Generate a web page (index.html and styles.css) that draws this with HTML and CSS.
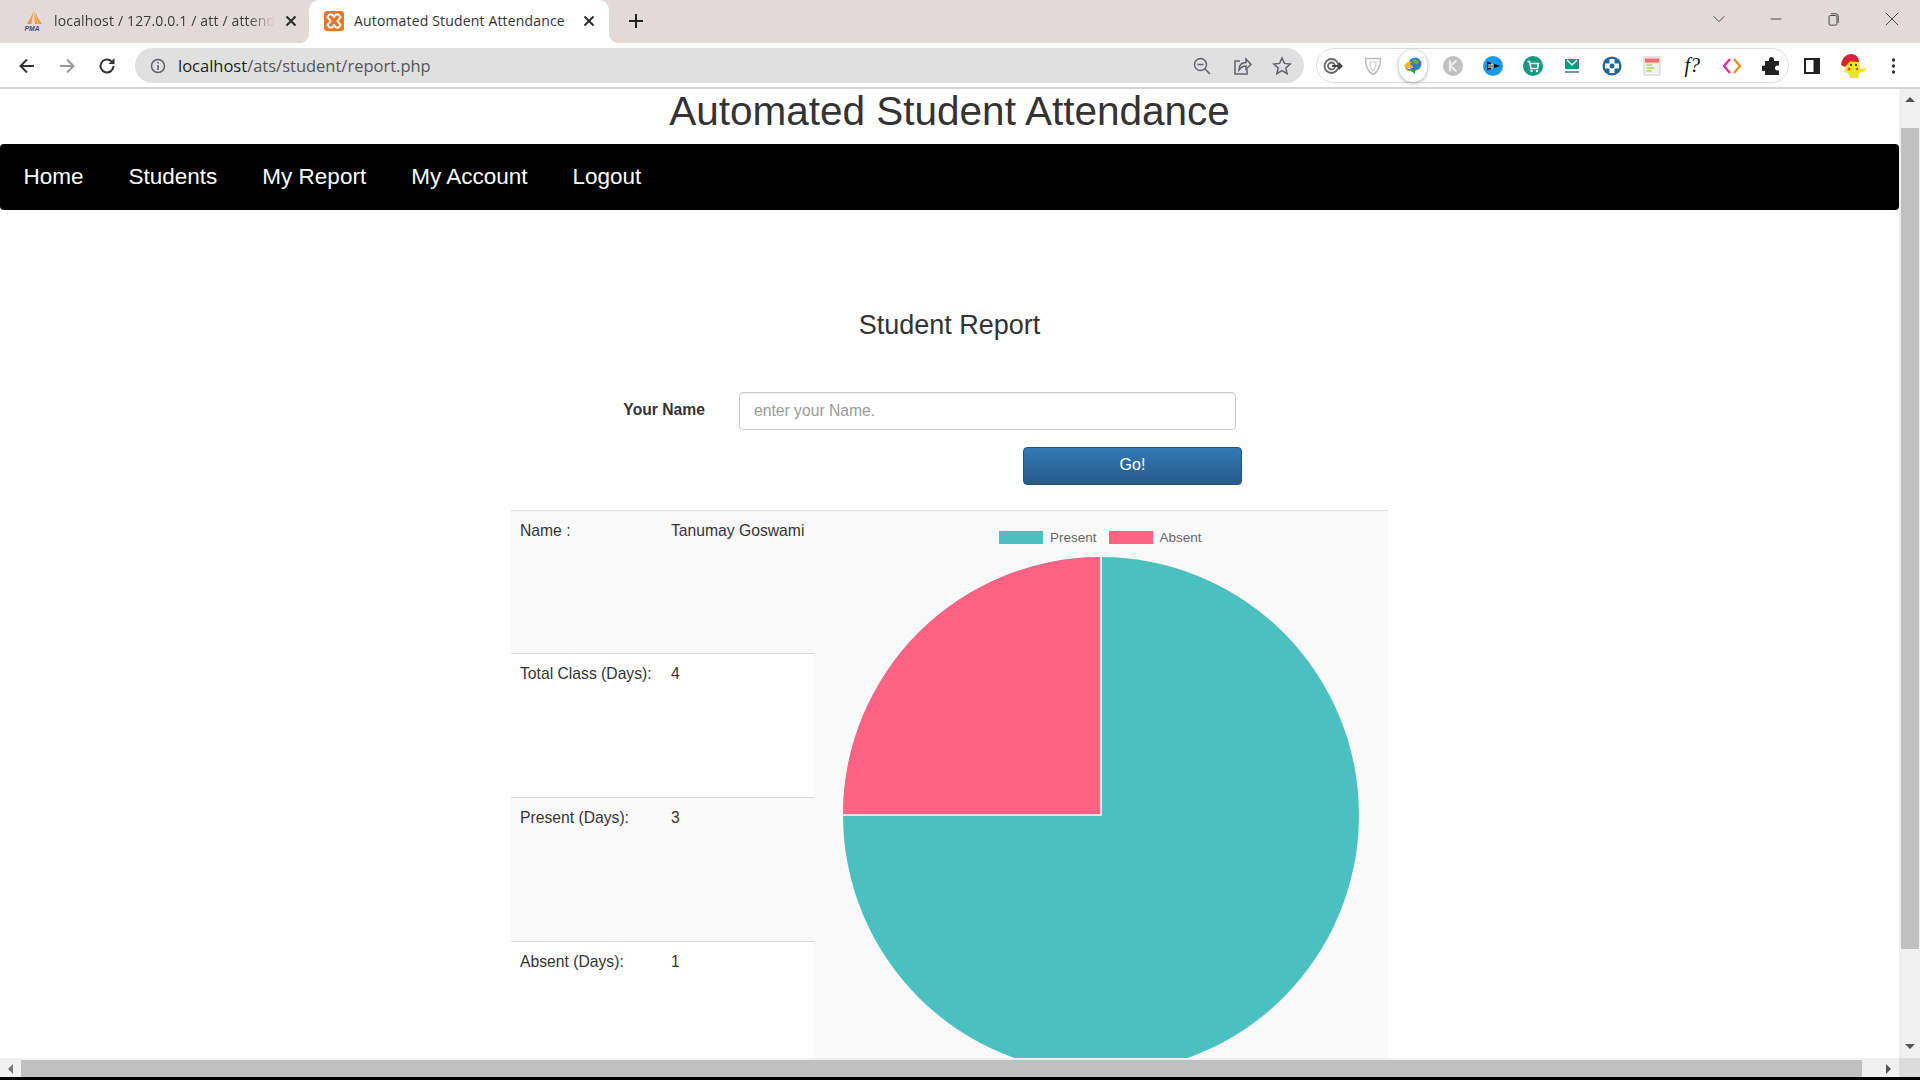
FILE: index.html
```
<!DOCTYPE html>
<html lang="en">
<head>
<meta charset="utf-8">
<title>Automated Student Attendance</title>
<link rel="stylesheet" href="styles.css">
</head>
<body>
<div class="window">
  <header class="tabbar">
    <div class="tab tab-idle">
      <svg class="favicon" viewBox="0 0 20 20"><path d="M9.500 0 7 6 3 13h4.500zM10 0l1 13h3zM11 1l3 6 4 6h-3.500z" fill="#f29a2e"/><text x="0.500" y="19.500" class="pma">PMA</text></svg>
      <span class="tab-title fade">localhost / 127.0.0.1 / att / attendance</span>
      <svg class="tab-x" viewBox="0 0 12 12"><path d="M1.500 1.500l9 9M10.500 1.500l-9 9"/></svg>
    </div>
    <div class="tab tab-active">
      <svg class="favicon" viewBox="0 0 20 20"><rect width="20" height="20" rx="3" fill="#f0731f"/><path d="M5.500 3.500h2.500l2 2.500 2-2.500h2.500l2 2.500-3 4 3 4-2 2.500H12l-2-2.500-2 2.500H5.500l-2-2.500 3-4-3-4z" fill="none" stroke="#fff" stroke-width="2"/></svg>
      <span class="tab-title">Automated Student Attendance</span>
      <svg class="tab-x" viewBox="0 0 12 12"><path d="M1.500 1.500l9 9M10.500 1.500l-9 9"/></svg>
    </div>
    <svg class="new-tab" viewBox="0 0 16 16"><path d="M8 1v14M1 8h14"/></svg>
    <div class="win-controls">
      <svg class="win-ic" viewBox="0 0 16 16"><path d="M2 5l6 6 6-6"/></svg>
      <svg class="win-ic" viewBox="0 0 16 16"><path d="M2 8h12"/></svg>
      <svg class="win-ic" viewBox="0 0 16 16"><path d="M3.500 5.500a1.500 1.500 0 0 1 1.500-1.500h6a1.500 1.500 0 0 1 1.500 1.500v8a1.500 1.500 0 0 1-1.500 1.500h-6a1.500 1.500 0 0 1-1.500-1.500zM5.500 2h6a2.500 2.500 0 0 1 2.500 2.500v8"/></svg>
      <svg class="win-ic win-close" viewBox="0 0 16 16"><path d="M1 1l14 14M15 1 1 15"/></svg>
    </div>
  </header>

  <div class="toolbar">
    <div class="nav-btns">
      <svg class="tb-ic" viewBox="0 0 20 20"><path d="M17 10H4M10 3.500 3.500 10l6.500 6.500" class="st-dark"/></svg>
      <svg class="tb-ic" viewBox="0 0 20 20"><path d="M3 10h13M10 3.500l6.500 6.500-6.500 6.500" class="st-grey"/></svg>
      <svg class="tb-ic" viewBox="0 0 20 20"><path d="M16.500 10a6.500 6.500 0 1 1-1.900-4.600" class="st-dark"/><path d="M17.500 2v6h-6z" fill="#333"/></svg>
    </div>
    <div class="omnibox">
      <svg class="info" viewBox="0 0 16 16"><circle cx="8" cy="8" r="6.500" fill="none" stroke="#5f6368" stroke-width="1.500"/><path d="M7.200 7h1.600v5H7.200zM7.200 4h1.600v1.600H7.200z" fill="#5f6368"/></svg>
      <span class="url"><span class="url-host">localhost</span>/ats/student/report.php</span>
      <div class="omni-actions">
        <svg class="tb-ic" viewBox="0 0 20 20"><circle cx="8.500" cy="8.500" r="6" class="st-thin"/><path d="M5.500 8.500h6M13 13l5 5" class="st-thin"/></svg>
        <svg class="tb-ic" viewBox="0 0 20 20"><path d="M8 5H3v13h12v-5M7 14c0-5 3-7.500 7-7.500V3l5 5.500L14 13v-3c-3 0-5 1-7 4z" class="st-thin"/></svg>
        <svg class="tb-ic" viewBox="0 0 20 20"><path d="M10 2l2.400 5.400 5.800.6-4.400 3.900 1.300 5.800L10 14.700 4.900 17.700l1.300-5.800L1.800 8l5.800-.6z" class="st-thin"/></svg>
      </div>
    </div>
    <div class="ext-pill">
      <svg class="ext" viewBox="0 0 20 20"><circle cx="8.500" cy="10" r="7" fill="none" stroke="#666" stroke-width="1.800"/><circle cx="8.500" cy="10" r="3.500" fill="none" stroke="#666" stroke-width="1.800"/><path d="M9 10h10M15.500 7l3 3-3 3" fill="none" stroke="#444" stroke-width="2"/></svg>
      <svg class="ext" viewBox="0 0 20 20"><path d="M2.500 2.500h15c0 8-2 13-7.500 16-5.500-3-7.500-8-7.500-16z" fill="none" stroke="#bbb" stroke-width="1.500"/><path d="M7 6h6c0 4-1 7-3 9-2-2-3-5-3-9z" fill="none" stroke="#ccc" stroke-width="1.200"/></svg>
      <div class="ext-idm"><svg class="ext" viewBox="0 0 20 20"><circle cx="12" cy="8" r="6.500" fill="#2f7fbe"/><path d="M9 3c3 0 6 1 7 4-3 2-6 0-7-4z" fill="#6bb04a"/><path d="M1 10c2-4 5-5 8-4l-2 2c2 1 3 2 3 4H3z" fill="#f5b31b"/><path d="M2 11c3 3 9 3 13 0l-3 4v3l-4-3c-3 0-5-1-6-4z" fill="#3b9a3c"/></svg></div>
      <svg class="ext" viewBox="0 0 20 20"><circle cx="10" cy="10" r="10" fill="#c0c0c0"/><path d="M7 4.500v11M13.500 4.500 7.500 10l6 5.500" fill="none" stroke="#eee" stroke-width="2.200"/></svg>
      <svg class="ext" viewBox="0 0 20 20"><circle cx="10" cy="10" r="10" fill="#1a9aef"/><path d="M4 5.500 17 10 4 14.500z" fill="#151515"/><path d="M6 8v4M8 8h2v4H8z" stroke="#fff" fill="none"/></svg>
      <svg class="ext" viewBox="0 0 20 20"><circle cx="10" cy="10" r="10" fill="#119c7d"/><path d="M4.500 5.500h2l1.500 7h6.500l1-5H7" fill="none" stroke="#fff" stroke-width="1.600"/><circle cx="8.500" cy="15" r="1.200" fill="#fff"/><circle cx="14" cy="15" r="1.200" fill="#fff"/></svg>
      <svg class="ext" viewBox="0 0 20 20"><rect x="3" y="3" width="14" height="10" fill="#17987e"/><path d="M5 4l5 5 5-5" fill="none" stroke="#fff" stroke-width="1.500"/><path d="M3 16h14" stroke="#5b6b78" stroke-width="1.500"/></svg>
      <svg class="ext" viewBox="0 0 20 20"><circle cx="10" cy="10" r="9.500" fill="#1d6a9b"/><path d="M7.500 3h5v4.500H17v5h-4.500V17h-5v-4.500H3v-5h4.500z" fill="#fff"/><circle cx="10" cy="10" r="2.500" fill="#1d6a9b"/></svg>
      <svg class="ext" viewBox="0 0 20 20"><rect x="2" y="1" width="16" height="18" fill="#f2f2f0" stroke="#ccc"/><rect x="3" y="2.500" width="14" height="4" fill="#f66"/><path d="M4.500 9h6M4.500 12h8M4.500 15h5" stroke="#a6d66e" stroke-width="1.500"/></svg>
      <span class="ext-f">f?</span>
      <svg class="ext" viewBox="0 0 20 20"><path d="M8 3 2 10l6 7" fill="none" stroke="#ec2c8c" stroke-width="2.400"/><path d="M12 3l6 7-6 7" fill="none" stroke="#f58a1f" stroke-width="2.400"/></svg>
      <svg class="ext" viewBox="0 0 20 20"><path d="M7 3.500a2.500 2.500 0 0 1 5 0V5h5v4.500h-1.500a2.500 2.500 0 0 0 0 5H17V19H3v-4H1.800a2.700 2.700 0 0 1 0-5.500H3V5h4z" fill="#222"/></svg>
    </div>
    <div class="tb-end">
      <svg class="ext" viewBox="0 0 20 20"><rect x="2" y="2" width="16" height="16" fill="#222"/><rect x="4" y="4" width="7.500" height="12" fill="#fff"/></svg>
      <svg class="pika" viewBox="0 0 26 26"><path d="M7 9l12-1 1 8 6-1-1 3-6 2-1 5H10l-2-5-4-1z" fill="#e9e81e"/><path d="M1 12C2 5 6 1 11 1s8 3 8 8l-9-.5-5 5.500z" fill="#d8252b"/><circle cx="11" cy="12" r="1" fill="#222"/><circle cx="16" cy="12" r="1" fill="#222"/><circle cx="9" cy="16" r="1.500" fill="#e5533c"/><circle cx="17" cy="16" r="1.300" fill="#e5533c"/></svg>
      <svg class="dots" viewBox="0 0 4 16"><circle cx="2" cy="2" r="1.700"/><circle cx="2" cy="8" r="1.700"/><circle cx="2" cy="14" r="1.700"/></svg>
    </div>
  </div>

  <div class="viewport-row">
    <main class="page">
      <h1 class="site-title">Automated Student Attendance</h1>
      <nav class="main-nav">
        <a class="nav-link">Home</a>
        <a class="nav-link">Students</a>
        <a class="nav-link">My Report</a>
        <a class="nav-link">My Account</a>
        <a class="nav-link">Logout</a>
      </nav>
      <div class="container">
        <h2 class="report-title">Student Report</h2>
        <form class="report-form">
          <label class="form-label">Your Name</label>
          <input class="form-input" placeholder="enter your Name.">
          <button class="go-btn" type="button">Go!</button>
        </form>
        <table class="report-table">
          <tr class="row-striped row-first">
            <td class="cell-label">Name :</td>
            <td class="cell-value">Tanumay Goswami</td>
            <td class="cell-chart" rowspan="4">
              <div class="legend">
                <i class="swatch swatch-present"></i><span class="legend-text">Present</span>
                <i class="swatch swatch-absent"></i><span class="legend-text">Absent</span>
              </div>
              <svg class="pie" viewBox="0 0 520 520"><circle cx="260" cy="260" r="259" fill="#4bc0c0"/><path d="M260 260V1A259 259 0 0 0 1 260z" fill="#ff6384"/><path d="M260 1v259H1" fill="none" stroke="#fff" stroke-width="1.500"/></svg>
            </td>
          </tr>
          <tr><td class="cell-label">Total Class (Days):</td><td class="cell-value">4</td></tr>
          <tr class="row-striped"><td class="cell-label">Present (Days):</td><td class="cell-value">3</td></tr>
          <tr><td class="cell-label">Absent (Days):</td><td class="cell-value">1</td></tr>
        </table>
      </div>
    </main>
    <aside class="vscroll">
      <i class="arrow arrow-up"></i>
      <div class="vthumb"></div>
      <i class="arrow arrow-down"></i>
    </aside>
  </div>
  <div class="hscroll">
    <div class="hbtn"><i class="arrow arrow-left"></i></div>
    <div class="hthumb"></div>
    <div class="hbtn hbtn-right"><i class="arrow arrow-right"></i></div>
    <div class="corner"></div>
  </div>
  <div class="taskline"></div>
</div>
</body>
</html>
```

FILE: styles.css
```
* { box-sizing: border-box; }
html, body { margin: 0; height: 100%; overflow: hidden; }
body { font-family: "Liberation Sans", Arial, sans-serif; color: #333; background: #fff; }
.window { width: 1920px; height: 1080px; display: flex; flex-direction: column; overflow: hidden; }

/* tab strip */
.tabbar { height: 43px; flex: none; background: #e2dad8; display: flex; align-items: flex-end; padding-left: 9px; position: relative; }
.tab { height: 43px; display: flex; align-items: center; position: relative; font-family: "Open Sans", sans-serif; font-size: 14px; line-height: 20px; color: #3c3c3c; padding-bottom: 2px; }
.tab-idle { width: 300px; padding-left: 15px; padding-right: 12px; }
.tab-active { width: 300px; padding-left: 15px; padding-right: 14px; background: #fff; border-radius: 10px 10px 0 0; color: #333; }
.tab-active::before, .tab-active::after { content: ""; position: absolute; bottom: 0; width: 10px; height: 10px; }
.tab-active::before { left: -10px; background: radial-gradient(circle at 0 0, transparent 10px, #fff 10.500px); }
.tab-active::after { right: -10px; background: radial-gradient(circle at 100% 0, transparent 10px, #fff 10.500px); }
.favicon { width: 20px; height: 20px; flex: none; margin-right: 10px; overflow: visible; }
.pma { font: italic bold 6.800px "Liberation Sans", sans-serif; fill: #3b4a80; }
.tab-title { flex: 1; white-space: nowrap; overflow: hidden; letter-spacing: 0.16px; }
.fade { -webkit-mask-image: linear-gradient(90deg, #000 88%, transparent); mask-image: linear-gradient(90deg, #000 88%, transparent); }
.tab-x { width: 12px; height: 12px; flex: none; margin-left: 10px; fill: none; stroke: #2b2b2b; stroke-width: 2; }
.new-tab { width: 16px; height: 16px; margin: 0 0 14px 19px; fill: none; stroke: #222; stroke-width: 2; flex: none; }
.win-controls { margin-left: auto; height: 43px; display: flex; align-items: flex-start; }
.win-ic { width: 14px; height: 14px; margin: 12px 21.500px 0; fill: none; stroke: #333; stroke-width: 1; flex: none; }
.win-close { margin-left: 23.500px; }

/* toolbar */
.toolbar { height: 46px; flex: none; background: #fff; border-bottom: 2px solid #d5d5d5; display: flex; align-items: flex-start; padding-top: 5px; }
.nav-btns { width: 135px; height: 35px; flex: none; display: flex; align-items: center; gap: 20px; padding-left: 17px; }
.tb-ic { width: 20px; height: 20px; flex: none; fill: none; }
.st-dark { fill: none; stroke: #333; stroke-width: 2; }
.st-grey { fill: none; stroke: #999; stroke-width: 2; }
.st-thin { fill: none; stroke: #5f6368; stroke-width: 1.500; }
.omnibox { width: 1169px; height: 35px; flex: none; background: #e0e0e0; border-radius: 18px; display: flex; align-items: center; padding: 0 12px 0 15px; }
.info { width: 16px; height: 16px; flex: none; margin-right: 12px; }
.url { font-family: "Open Sans", sans-serif; font-size: 16.500px; color: #555; flex: 1; white-space: nowrap; }
.url-host { color: #222; }
.omni-actions { display: flex; gap: 20px; }
.ext-pill { width: 473px; height: 35px; flex: none; margin-left: 12px; border: 1px solid #ddd; border-radius: 18px; display: flex; align-items: center; justify-content: space-between; padding: 0 6px 0 6px; }
.ext { width: 20px; height: 20px; flex: none; }
.ext-idm { width: 28px; height: 32px; margin: 0 -4px; flex: none; border-radius: 14px; background: #fff; box-shadow: 0 1px 4px rgba(0,0,0,.35); display: flex; align-items: center; justify-content: center; }
.ext-f { width: 20px; flex: none; font: italic 20px "Liberation Serif", serif; color: #111; text-align: center; }
.tb-end { flex: 1; height: 35px; display: flex; align-items: center; padding-left: 13px; }
.pika { width: 26px; height: 26px; flex: none; margin-left: 18px; }
.dots { width: 5px; height: 16px; flex: none; margin-left: 25px; fill: #333; }

/* page */
.viewport-row { flex: 1; min-height: 0; display: flex; }
.page { flex: 1; min-width: 0; overflow: hidden; background: #fff; }
.site-title { margin: 0; height: 55px; font-weight: 400; font-size: 40.500px; line-height: 45px; text-align: center; color: #333; }
.main-nav { height: 66px; background: #000; border-radius: 4px; display: flex; align-items: center; padding-left: 23.500px; gap: 45px; padding-bottom: 1px; }
.nav-link { color: #fff; font-size: 22.500px; }
.container { width: 877px; margin-left: 511px; }
.report-title { margin: 0; padding-top: 97px; height: 182px; font-weight: 400; font-size: 27px; line-height: 36px; text-align: center; color: #333; }
.report-form { display: grid; grid-template-columns: 194px 497px; column-gap: 34px; row-gap: 17px; align-items: center; }
.form-label { font-weight: 700; font-size: 15.700px; text-align: right; color: #333; margin-top: -2px; }
.form-input { height: 38px; width: 497px; border: 1px solid #ccc; border-radius: 4px; padding: 0 14px; font: 15.700px "Liberation Sans", sans-serif; box-shadow: inset 0 1px 1px rgba(0,0,0,.075); }
.form-input::placeholder { color: #999; opacity: 1; }
.go-btn { grid-column: 2; justify-self: end; margin-right: -6px; width: 219px; height: 38px; border: 1px solid #245580; border-radius: 4px; background: linear-gradient(#337ab7, #265a88); color: #fff; font: 16px "Liberation Sans", sans-serif; padding-bottom: 3px; }
.report-table { width: 877px; margin-top: 25px; border-collapse: collapse; table-layout: fixed; font-size: 15.700px; }
.report-table td { vertical-align: top; border-top: 1px solid #ddd; height: 144px; padding: 10px 9px 8px; line-height: 20px; white-space: nowrap; }
.report-table .row-first td { height: 143px; }
.row-striped td { background: #f9f9f9; }
.cell-label { width: 151px; }
.cell-value { width: 152px; }
.report-table .cell-chart { width: 574px; background: #f9f9f9; padding: 0; position: relative; }
.legend { height: 45px; display: flex; align-items: center; padding: 8px 0 0 185px; font-size: 13.500px; color: #666; }
.swatch { width: 44px; height: 13px; flex: none; }
.swatch-present { background: #4bc0c0; }
.swatch-absent { background: #ff6384; margin-left: 12px; }
.legend-text { margin-left: 7px; }
.pie { display: block; width: 518px; height: 518px; margin-left: 27.500px; }

/* scrollbars */
.vscroll { width: 21px; flex: none; background: #f0f0f0; display: flex; flex-direction: column; align-items: center; }
.vthumb { width: 18px; height: 821px; background: #c0c0c0; margin: 39px 0 auto; }
.hscroll { height: 19px; flex: none; background: #f0f0f0; display: flex; align-items: flex-end; }
.hbtn { width: 21px; height: 17px; flex: none; display: flex; align-items: center; justify-content: center; }
.hthumb { width: 1841px; height: 17px; flex: none; background: #c0c0c0; }
.hbtn-right { width: 37px; padding-left: 16px; }
.corner { width: 21px; height: 19px; flex: none; background: #dcdcdc; }
.taskline { height: 3px; flex: none; background: #000; }
.arrow { width: 0; height: 0; display: block; border-style: solid; border-color: transparent; flex: none; }
.arrow-up { border-width: 0 5px 5px; border-bottom-color: #555; margin-top: 8px; margin-bottom: -13px; }
.arrow-down { border-width: 5px 5px 0; border-top-color: #555; margin-bottom: 9px; }
.arrow-left { border-width: 5px 5px 5px 0; border-right-color: #777; }
.arrow-right { border-width: 5px 0 5px 5px; border-left-color: #555; }
```
